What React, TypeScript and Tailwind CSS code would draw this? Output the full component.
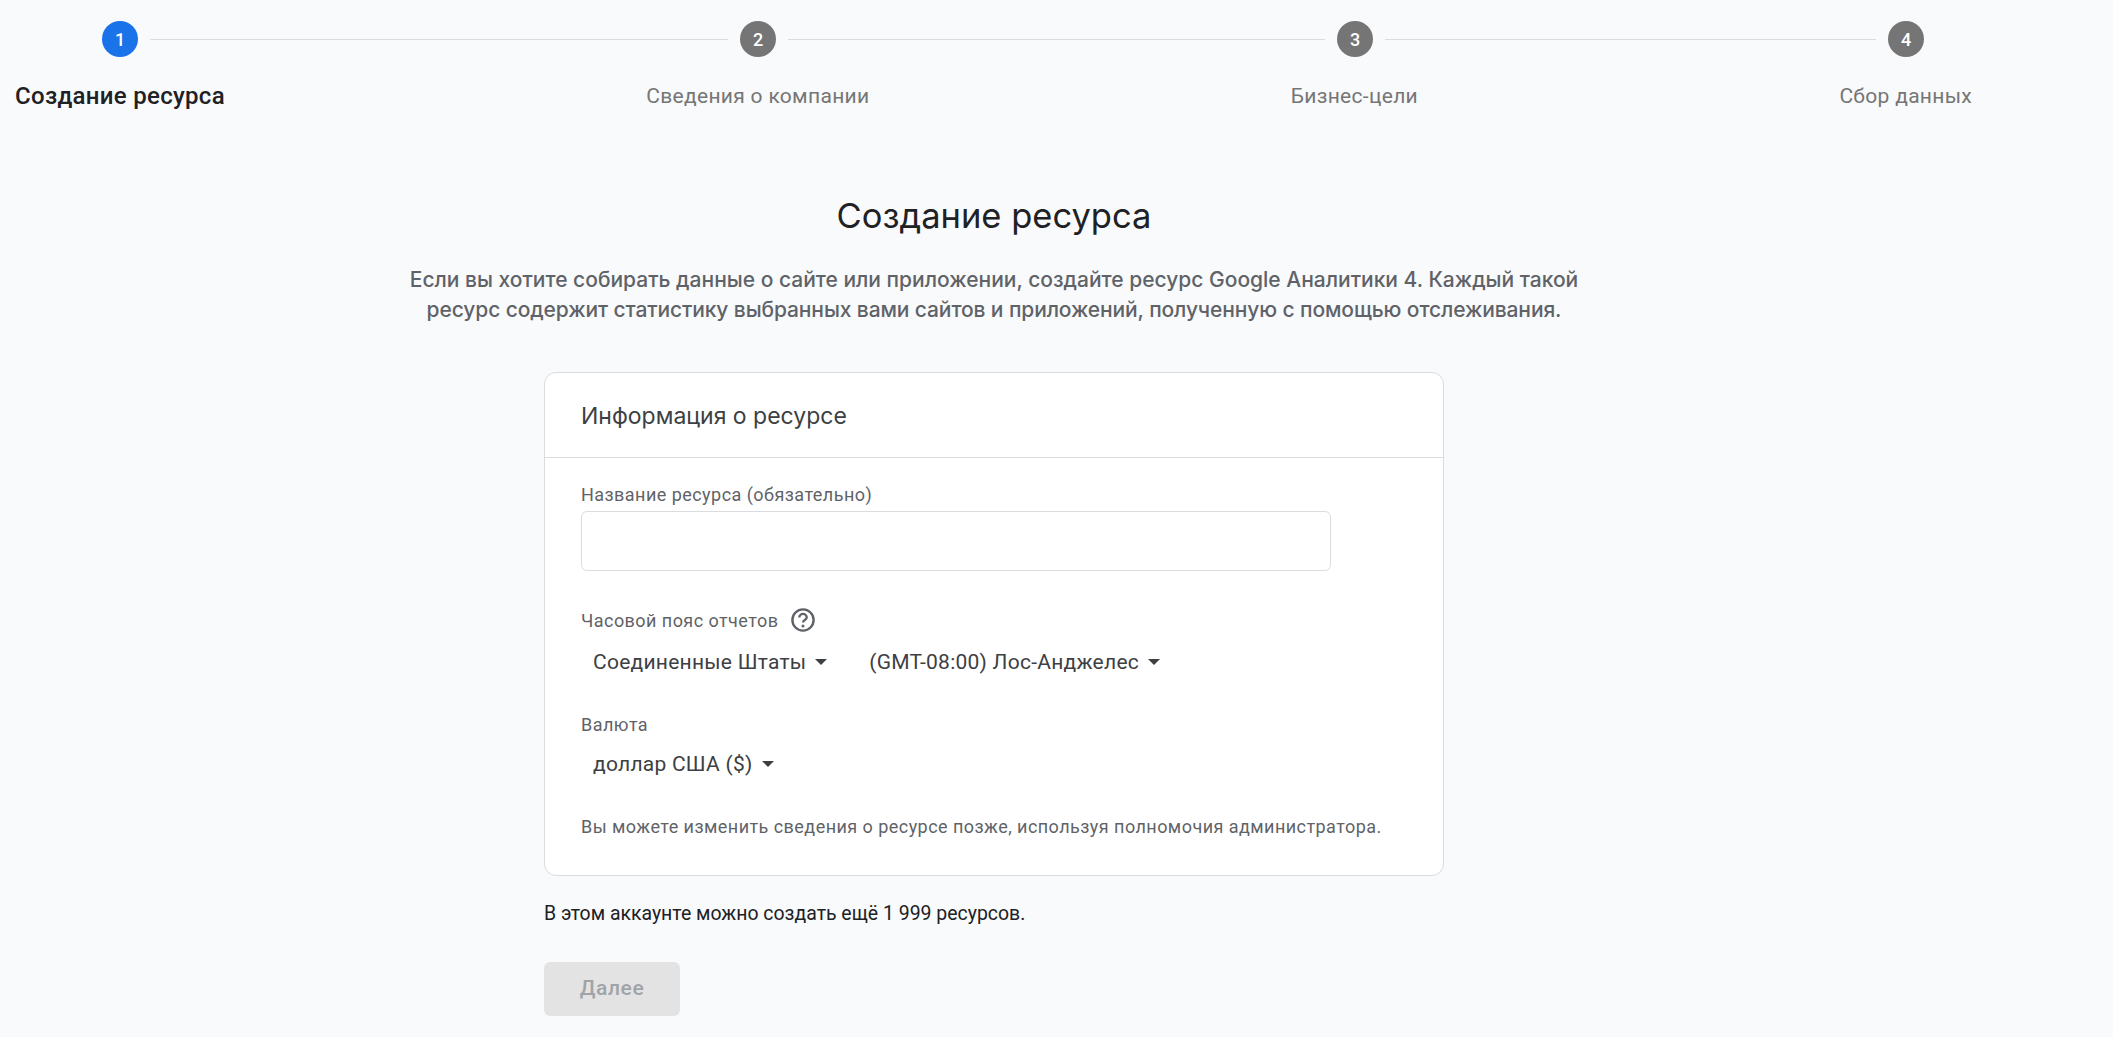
import React from "react";

const roboto = "font-['Roboto',sans-serif]";
const sans = "font-['Inter',sans-serif]";

function Circle({ n, active }: { n: number; active?: boolean }) {
  return (
    <div className={`w-9 h-9 rounded-full shrink-0 flex items-center justify-center text-white text-[18px] font-medium ${active ? "bg-[#1a73e8]" : "bg-[#757575]"}`}>
      {n}
    </div>
  );
}

function Line({ w }: { w: string }) {
  return <div className={`h-px bg-[#dadce0] mx-3 shrink-0 ${w}`} />;
}

function Arrow() {
  return (
    <svg width="12" height="6" viewBox="0 0 12 6" className="ml-[9px] shrink-0">
      <path d="M0 0h12L6 6z" fill="#3c4043" />
    </svg>
  );
}

function Select({ label }: { label: string }) {
  return (
    <div className="flex items-center pl-3 text-[21px] leading-[36px] text-[#3c4043] tracking-[0.25px]">
      <span>{label}</span>
      <Arrow />
    </div>
  );
}

export default function App() {
  return (
    <div className={`h-[1037px] w-full overflow-hidden bg-[#f9fafc] ${roboto}`}>
      <div className="flex items-center pt-[21px] pl-[102px]">
        <Circle n={1} active />
        <Line w="w-[578px]" />
        <Circle n={2} />
        <Line w="w-[537px]" />
        <Circle n={3} />
        <Line w="w-[491px]" />
        <Circle n={4} />
      </div>
      <div className="flex justify-between pl-[15px] pr-[141px] mt-[24px] text-[21px] leading-[30px] tracking-[0.3px]">
        <div className="font-medium text-[24px] text-[#202124]">Создание ресурса</div>
        <div className="text-[#757575]">Сведения о компании</div>
        <div className="text-[#757575]">Бизнес-цели</div>
        <div className="text-[#757575]">Сбор данных</div>
      </div>

      <div className="w-[1988px] flex flex-col items-center">
        <h1 className={`mt-[81px] text-[34.5px] leading-[48px] text-[#202124] font-normal ${sans}`}>Создание ресурса</h1>
        <p className={`mt-[25px] text-center text-[21px] leading-[30px] text-[#5f6368] font-medium ${sans}`}>
          Если вы хотите собирать данные о сайте или приложении, создайте ресурс Google Аналитики 4. Каждый такой
          <br />
          <span className="tracking-[-0.11px]">ресурс содержит статистику выбранных вами сайтов и приложений, полученную с помощью отслеживания.</span>
        </p>

        <div className="w-[900px]">
          <div className="mt-[47px] h-[504px] bg-white border border-[#dadce0] rounded-xl">
            <div className={`h-[85px] flex items-center pl-9 pt-[2px] border-b border-[#dadce0] text-[23px] text-[#3c4043] ${sans}`}>
              Информация о ресурсе
            </div>
            <div className="px-9">
              <div className="mt-[23px] text-[18px] leading-[27px] text-[#5f6368] tracking-[0.45px]">Название ресурса (обязательно)</div>
              <div className="mt-[3px] w-[750px] h-[60px] bg-white border border-[#dadce0] rounded-md" />

              <div className="mt-[31px] flex items-center h-9 text-[18px] text-[#5f6368] tracking-[0.45px]">
                <span>Часовой пояс отчетов</span>
                <svg width="24" height="24" viewBox="0 0 24 24" className="ml-[13px]" fill="none">
                  <circle cx="12" cy="12" r="10.6" stroke="#5f6368" strokeWidth="2.4" />
                  <path d="M8.3 9.6a3.7 3.7 0 0 1 7.4 0c0 2.4-3.7 2.6-3.7 5" stroke="#5f6368" strokeWidth="2.4" />
                  <circle cx="12" cy="18" r="1.5" fill="#5f6368" />
                </svg>
              </div>
              <div className="mt-[6px] flex">
                <Select label="Соединенные Штаты" />
                <div className="ml-[30px]">
                  <Select label="(GMT-08:00) Лос-Анджелес" />
                </div>
              </div>

              <div className="mt-[31px] text-[18px] leading-[27px] text-[#5f6368] tracking-[0.45px]">Валюта</div>
              <div className="mt-[8px] flex">
                <Select label="доллар США ($)" />
              </div>

              <div className="mt-[31px] text-[18px] leading-[27px] text-[#5f6368] tracking-[0.45px]">
                Вы можете изменить сведения о ресурсе позже, используя полномочия администратора.
              </div>
            </div>
          </div>

          <div className="mt-[23px] text-[19.45px] leading-[30px] text-[#202124]">В этом аккаунте можно создать ещё 1 999 ресурсов.</div>

          <div className="mt-[33px] w-[136px] h-[54px] rounded-md bg-[#e3e3e3] flex items-center justify-center text-[21px] font-medium text-[#a0a4a8] tracking-[0.6px]">
            Далее
          </div>
        </div>
      </div>
    </div>
  );
}
